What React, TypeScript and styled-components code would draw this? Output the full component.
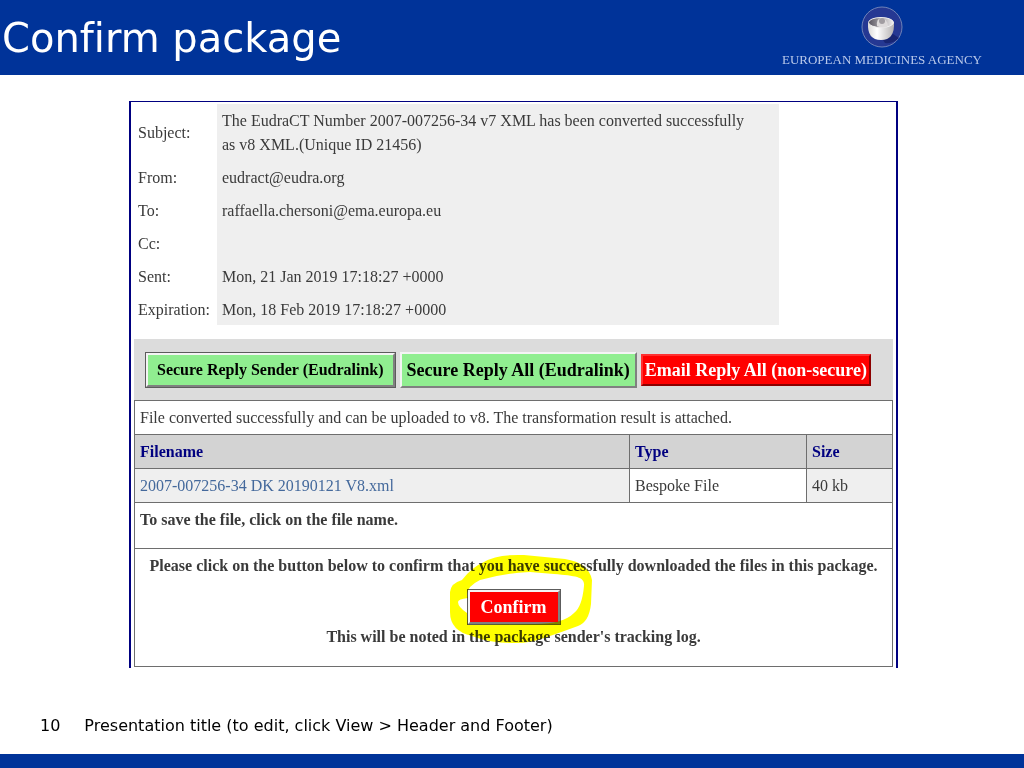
import React from "react";
import styled, { createGlobalStyle } from "styled-components";

const Global = createGlobalStyle`
  * { box-sizing: border-box; }
  body { margin: 0; background: #fff; }
`;

const serif = `"Liberation Serif", "Times New Roman", serif`;
const sans = `"DejaVu Sans", Verdana, sans-serif`;

const Slide = styled.div`
  display: flex;
  flex-direction: column;
  min-height: 100vh;
  font-family: ${sans};
  font-variant-ligatures: none;
  color: #000;
`;

const Header = styled.header`
  display: flex;
  justify-content: space-between;
  align-items: center;
  height: 75px;
  padding: 0 42px 0 2px;
  background: #003399;
  color: #fff;
`;

const Title = styled.h1`
  margin: 0;
  font-size: 40px;
  line-height: 48px;
  font-weight: 400;
`;

const Brand = styled.div`
  display: flex;
  flex-direction: column;
  align-items: center;
  gap: 2px;
`;

const BrandName = styled.span`
  font-family: ${serif};
  font-size: 13px;
  line-height: 20px;
  color: #b9c9ea;
  white-space: nowrap;
`;

const Main = styled.main`
  flex: 1;
  padding: 26px 126px 0 129px;
`;

const Frame = styled.section`
  border: solid #000080;
  border-width: 1px 2px 0;
  padding: 2px 3px 1px;
  font-family: ${serif};
  font-size: 16px;
  line-height: 24px;
  color: #3a3a3a;
`;

const Details = styled.table`
  width: 85%;
  border-collapse: collapse;
  margin-bottom: 14px;

  th, td { height: 33px; padding: 5px 4px 3px; text-align: left; font-weight: 400; }
  th { width: 83px; }
  td { background: #efefef; padding-left: 5px; padding-right: 24px; }
`;

const Toolbar = styled.div`
  display: flex;
  align-items: center;
  gap: 4px;
  height: 61px;
  padding: 0 11px;
  background: #dcdcdc;
`;

const ActionButton = styled.button<{ $tone: "green" | "red"; $outlined?: boolean; $size: number }>`
  flex: none;
  padding: ${p => (p.$outlined ? "4px 9px" : p.$tone === "red" ? "3px 2px" : "5px")};
  font: bold ${p => p.$size}px/22px ${serif};
  white-space: nowrap;
  color: ${p => (p.$tone === "red" ? "#fff" : "#000")};
  background: ${p => (p.$tone === "red" ? "#ff0000" : "#90ee90")};
  border: 2px solid;
  border-color: ${p =>
    p.$tone === "red" && !p.$outlined ? "#ff3030 #8b0000 #8b0000 #ff3030" : "#f4f4f4 #808080 #808080 #f4f4f4"};
  box-shadow: ${p => (p.$outlined ? "0 0 0 1px #5c5c5c" : "none")};
  margin: ${p => (p.$outlined ? "1px" : "0")};
`;

const Files = styled.table`
  width: 100%;
  border-collapse: collapse;

  th, td {
    height: 34px;
    padding: 4px 5px;
    border: 1px solid #6e6e6e;
    text-align: left;
  }
  th { background: #d3d3d3; color: #000080; }
`;

const Column = styled.col<{ $width?: number }>`
  width: ${p => (p.$width ? `${p.$width}px` : "auto")};
`;

const Cell = styled.td<{ $shaded?: boolean }>`
  background: ${p => (p.$shaded ? "#efefef" : "#fff")};
`;

const NoteRow = styled.tr`
  td { height: 46px; vertical-align: top; padding-top: 5px; font-weight: 700; }
`;

const ConfirmRow = styled.tr`
  td { height: 118px; vertical-align: top; padding-top: 5px; font-weight: 700; }
`;

const FileLink = styled.a`
  color: #44699c;
  text-decoration: none;
`;

const ConfirmBlock = styled.div`
  display: flex;
  flex-direction: column;
  align-items: center;
  white-space: nowrap;
`;

const ConfirmArea = styled.div`
  position: relative;
  padding-top: 11px;
`;

const ConfirmButton = styled(ActionButton)`
  display: block;
  padding: 4px 11px;
`;

const Highlight = styled.svg`
  position: absolute;
  left: -18px;
  top: -24px;
  pointer-events: none;
  mix-blend-mode: multiply;
`;

const Footer = styled.footer`
  display: flex;
  align-items: center;
  gap: 24px;
  height: 70px;
  padding: 0 40px;
  font-size: 16px;
  line-height: 20px;
  border-bottom: 14px solid #003399;
`;

const details = [
  ["Subject:", "The EudraCT Number 2007-007256-34 v7 XML has been converted successfully as v8 XML.(Unique ID 21456)"],
  ["From:", "eudract@eudra.org"],
  ["To:", "raffaella.chersoni@ema.europa.eu"],
  ["Cc:", ""],
  ["Sent:", "Mon, 21 Jan 2019 17:18:27 +0000"],
  ["Expiration:", "Mon, 18 Feb 2019 17:18:27 +0000"],
];

function Emblem() {
  return (
    <svg width="42" height="42" viewBox="0 0 42 42" aria-hidden="true">
      <defs>
        <linearGradient id="bowl" x1="0" x2="1">
          <stop offset="0" stopColor="#d9d8d6" />
          <stop offset="0.35" stopColor="#fff" />
          <stop offset="1" stopColor="#b5b2b2" />
        </linearGradient>
        <linearGradient id="inside" x1="0" x2="1">
          <stop offset="0" stopColor="#57545f" />
          <stop offset="0.5" stopColor="#a5a2a6" />
          <stop offset="1" stopColor="#f0eeee" />
        </linearGradient>
      </defs>
      <circle cx="21" cy="21" r="20" fill="#253893" stroke="#6f82b8" />
      <path d="M22 34 32 28 38 32Q32 38 24 37Z" fill="#172573" />
      <path d="M7 17Q6 34 20 34Q34 34 33 16Z" fill="url(#bowl)" />
      <ellipse cx="20" cy="16.5" rx="12.5" ry="5" fill="url(#inside)" stroke="#f1f0f0" />
      <path d="M16 20Q15 13 20 12Q26 12 27 20Q22 23 16 20Z" fill="#dedbdb" />
      <circle cx="21" cy="15" r="3" fill="#a19da1" />
    </svg>
  );
}

export default function App() {
  return (
    <Slide>
      <Global />
      <Header>
        <Title>Confirm package</Title>
        <Brand>
          <Emblem />
          <BrandName>EUROPEAN MEDICINES AGENCY</BrandName>
        </Brand>
      </Header>
      <Main>
        <Frame>
          <Details>
            <tbody>
              {details.map(([label, value]) => (
                <tr key={label}>
                  <th scope="row">{label}</th>
                  <td>{value}</td>
                </tr>
              ))}
            </tbody>
          </Details>
          <Toolbar>
            <ActionButton type="button" $tone="green" $size={16} $outlined>Secure Reply Sender (Eudralink)</ActionButton>
            <ActionButton type="button" $tone="green" $size={18}>Secure Reply All (Eudralink)</ActionButton>
            <ActionButton type="button" $tone="red" $size={18}>Email Reply All (non-secure)</ActionButton>
          </Toolbar>
          <Files>
            <colgroup>
              <Column />
              <Column $width={177} />
              <Column $width={86} />
            </colgroup>
            <tbody>
              <tr>
                <Cell colSpan={3}>File converted successfully and can be uploaded to v8. The transformation result is attached.</Cell>
              </tr>
              <tr>
                <th scope="col">Filename</th>
                <th scope="col">Type</th>
                <th scope="col">Size</th>
              </tr>
              <tr>
                <Cell $shaded><FileLink href="#file">2007-007256-34 DK 20190121 V8.xml</FileLink></Cell>
                <Cell>Bespoke File</Cell>
                <Cell $shaded>40 kb</Cell>
              </tr>
              <NoteRow>
                <Cell colSpan={3}>To save the file, click on the file name.</Cell>
              </NoteRow>
              <ConfirmRow>
                <Cell colSpan={3}>
                  <ConfirmBlock>
                    <span>Please click on the button below to confirm that you have successfully downloaded the files in this package.</span>
                    <ConfirmArea>
                      <ConfirmButton type="button" $tone="red" $size={18} $outlined>Confirm</ConfirmButton>
                      <Highlight width="144" height="90" viewBox="449 554 144 90" aria-hidden="true">
                        <path
                          fill="#ffff00"
                          fillRule="evenodd"
                          d="M450 592Q451 583 462 580Q472 567 484 562Q497 554 524 555Q545 557 565 559Q589 563 592 580L591 604Q589 622 578 626Q562 632 544 638Q530 643 517 643Q492 644 472 636Q450 631 450 612ZM458 602Q458 599 468 598Q464 588 480 580Q503 573 530 572L554 574C577 576 585 577 584 586Q582 607 574 613Q563 624 535 624L468 625L467 613Q458 607 458 602Z"
                        />
                      </Highlight>
                    </ConfirmArea>
                    <span>This will be noted in the package sender's tracking log.</span>
                  </ConfirmBlock>
                </Cell>
              </ConfirmRow>
            </tbody>
          </Files>
        </Frame>
      </Main>
      <Footer>
        <span>10</span>
        <span>Presentation title (to edit, click View &gt; Header and Footer)</span>
      </Footer>
    </Slide>
  );
}
